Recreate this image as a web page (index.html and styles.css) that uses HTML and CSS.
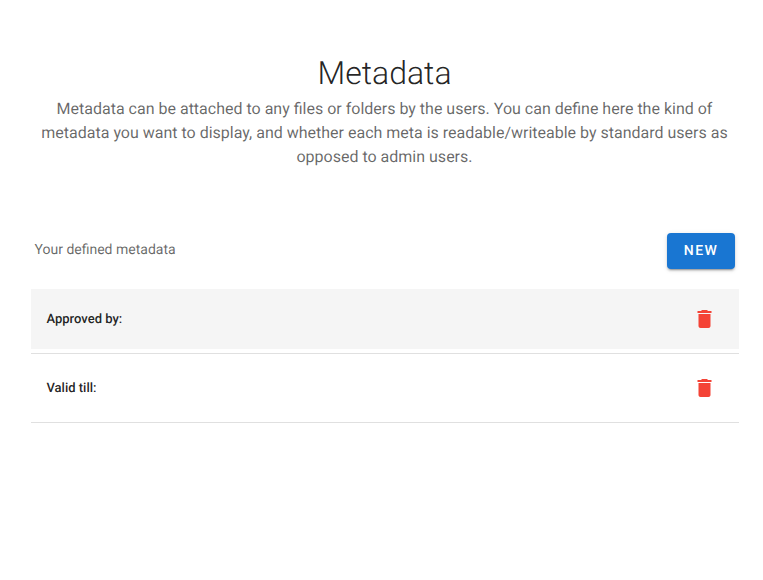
FILE: index.html
```
<!DOCTYPE html>
<html>
<head>
<meta charset="utf-8">
<title>Metadata</title>
<link rel="stylesheet" href="styles.css">
</head>
<body>
<div class="page">
  <header class="head">
    <h1 class="title">Metadata</h1>
    <p class="desc">Metadata can be attached to any files or folders by the users. You can define here the kind of metadata you want to display, and whether each meta is readable/writeable by standard users as opposed to admin users.</p>
  </header>
  <div class="toolbar">
    <span class="sub">Your defined metadata</span>
    <button class="btn">NEW</button>
  </div>
  <ul class="list">
    <li class="row"><div class="inner active"><span class="name">Approved by:</span><span class="act"><svg viewBox="0.5 0 24 24" width="24" height="24"><path d="M6 19c0 1.100.9 2 2 2h8c1.100 0 2-.9 2-2V7H6v12zM19 4h-3.500l-1-1h-5l-1 1H5v2h14V4z"/></svg></span></div></li>
    <li class="row"><div class="inner"><span class="name">Valid till:</span><span class="act"><svg viewBox="0.5 0 24 24" width="24" height="24"><path d="M6 19c0 1.100.9 2 2 2h8c1.100 0 2-.9 2-2V7H6v12zM19 4h-3.500l-1-1h-5l-1 1H5v2h14V4z"/></svg></span></div></li>
  </ul>
</div>
</body>
</html>
```
FILE: styles.css
```
html, body { margin: 0; padding: 0; background: #fff; }
body { font-family: Roboto, sans-serif; color: rgba(0,0,0,.87); text-rendering: geometricPrecision; }
.page { padding: 53px 24px 0 31px; }
.head { text-align: center; width: 707px; }
.title { margin: 0 0 4px; font-size: 32px; line-height: 40px; font-weight: 300; }
.desc { margin: 0; font-size: 16px; line-height: 24px; color: rgba(0,0,0,.6); font-weight: 400; padding: 0 4px; }
.toolbar { display: flex; justify-content: space-between; align-items: center; width: 708px; margin-top: 64px; padding-bottom: 16px; }
.sub { font-size: 14px; line-height: 20px; color: rgba(0,0,0,.6); padding-left: 3.5px; margin-top: -3px; }
.btn { height: 36px; width: 68px; margin-right: 4px; border: 0; border-radius: 4px; background: #1976d2; color: #fff; font: 500 14px Roboto, sans-serif; letter-spacing: 1.4px; box-shadow: 0 3px 1px -2px rgba(0,0,0,.2), 0 2px 2px 0 rgba(0,0,0,.14), 0 1px 5px 0 rgba(0,0,0,.12); padding: 0; text-rendering: geometricPrecision; }
.list { list-style: none; margin: 0; padding: 0; width: 708px; }
.row { padding: 4px 0; border-bottom: 1px solid rgba(0,0,0,.12); }
.inner { display: flex; align-items: center; justify-content: space-between; height: 60px; padding-left: 15.5px; }
.inner.active { background: #f5f5f5; }
.name { font-size: 13px; font-weight: 500; line-height: 20px; color: rgba(0,0,0,.87); padding-top: 1px; }
.act { width: 24px; height: 24px; margin-right: 22px; }
.act svg { display: block; fill: #f44336; }
```
